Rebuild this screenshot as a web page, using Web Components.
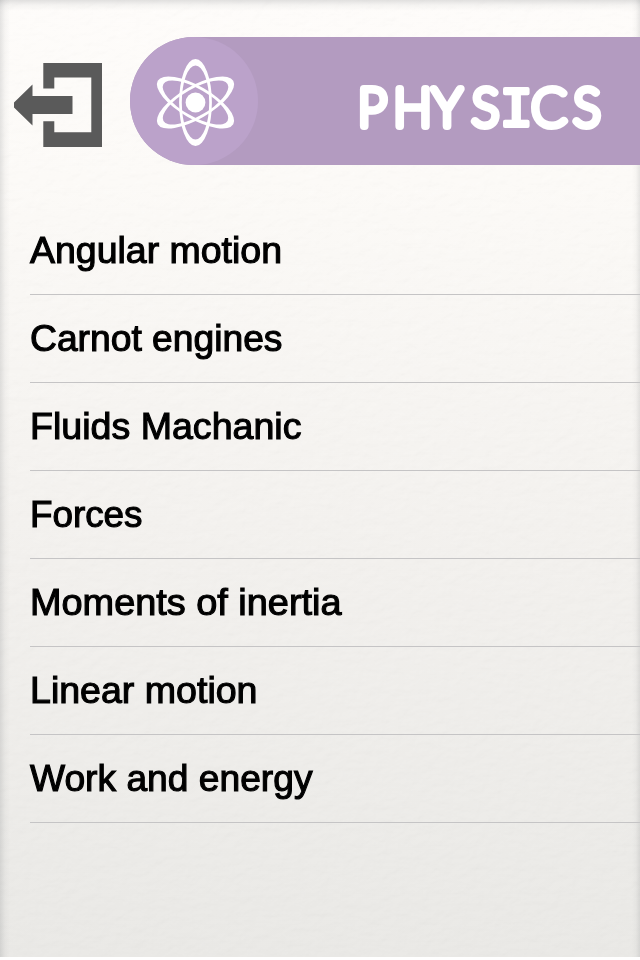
<!DOCTYPE html>
<html lang="en">
<head>
<meta charset="utf-8">
<title>Physics</title>
<style>
    html, body {
        margin: 0;
        background: #fff;
    }
</style>
</head>
<body>
<paper-screen>
    <subject-header slot="header" name="PHYSICS"></subject-header>
    <topic-list>
        <topic-item text-width="252">Angular motion</topic-item>
        <topic-item text-width="252.5">Carnot engines</topic-item>
        <topic-item text-width="271.5">Fluids Machanic</topic-item>
        <topic-item text-width="112.5">Forces</topic-item>
        <topic-item text-width="311.5">Moments of inertia</topic-item>
        <topic-item text-width="227.5">Linear motion</topic-item>
        <topic-item text-width="282.5">Work and energy</topic-item>
    </topic-list>
</paper-screen>

<script>
/**
 * Full screen paper background with shaded edges
 */
class PaperScreen extends HTMLElement {
    constructor() {
        super();
        this.attachShadow({ mode: 'open' });
        this.shadowRoot.innerHTML = `
            <style>
                :host {
                    display: block;
                    position: relative;
                    box-sizing: border-box;
                    width: 640px;
                    height: 957px;
                    overflow: hidden;
                    background: linear-gradient(#fffdfb 0, #fdfbf8 180px, #f3f1ee 560px, #ecebe8 860px, #eae9e6 100%);
                }
                .grain, .edges {
                    position: absolute;
                    inset: 0;
                    width: 100%;
                    height: 100%;
                }
                .grain {
                    opacity: 0.018;
                }
                .edges {
                    background:
                        linear-gradient(90deg, rgba(70, 75, 80, 0.14), rgba(70, 75, 80, 0.04) 5px, transparent 10px),
                        linear-gradient(270deg, rgba(70, 75, 80, 0.12), rgba(70, 75, 80, 0.03) 4px, transparent 8px),
                        linear-gradient(rgba(70, 75, 80, 0.16), rgba(70, 75, 80, 0.05) 5px, transparent 11px);
                }
                .content {
                    position: relative;
                    display: flex;
                    flex-direction: column;
                    padding-top: 37px;
                    gap: 42px;
                }
            </style>
            <svg class="grain" aria-hidden="true">
                <filter id="paper" x="0" y="0" width="100%" height="100%">
                    <feTurbulence type="fractalNoise" baseFrequency="0.08 0.13" numOctaves="3" seed="4" result="n"/>
                    <feDiffuseLighting in="n" surfaceScale="3" lighting-color="#fff">
                        <feDistantLight azimuth="60" elevation="50"/>
                    </feDiffuseLighting>
                </filter>
                <rect width="100%" height="100%" filter="url(#paper)"/>
            </svg>
            <div class="edges"></div>
            <div class="content">
                <slot name="header"></slot>
                <slot></slot>
            </div>
        `;
    }
}

/**
 * Exit button
 */
class ExitButton extends HTMLElement {
    constructor() {
        super();
        this.attachShadow({ mode: 'open' });
        this.shadowRoot.innerHTML = `
            <style>
                :host { display: block; width: 88px; height: 84px; }
                svg { display: block; fill: #5a5a5a; }
            </style>
            <svg width="88" height="84" viewBox="0 0 88 84">
                <path d="M29.3 0H88V84H29.3V58.3H40.3V69.3H77.3V14.6H40.3V25.5H29.3Z"/>
                <path d="M0 39.5L18.5 21.5V33H58.5V51H18.5V62.5L0 44.5Z"/>
            </svg>
        `;
    }
}

/**
 * Atom logo, each orbit is the gap between two ellipses
 */
class AtomIcon extends HTMLElement {
    constructor() {
        super();
        this.attachShadow({ mode: 'open' });
        const orbit = 'M-16.4 0A16.4 43.6 0 0 1 16.4 0A16.4 43.6 0 0 1 -16.4 0Z'
            + 'M-13.7 0A13.7 37 0 0 1 13.7 0A13.7 37 0 0 1 -13.7 0Z';
        const orbits = [0, 60, 120].map(angle => `
            <path fill-rule="evenodd" transform="rotate(${angle})" d="${orbit}"/>
        `).join('');
        this.shadowRoot.innerHTML = `
            <style>
                :host { display: block; width: 128px; height: 128px; border-radius: 50%; background: #bba2ca; }
                svg { display: block; fill: #fff; }
            </style>
            <svg width="128" height="128" viewBox="-65.5 -65.5 128 128">
                ${orbits}
                <circle r="9.9"/>
            </svg>
        `;
    }
}

/**
 * Header row: exit button and the coloured subject banner
 */
class SubjectHeader extends HTMLElement {
    constructor() {
        super();
        this.attachShadow({ mode: 'open' });
    }

    connectedCallback() {
        const name = this.getAttribute('name');
        this.shadowRoot.innerHTML = `
            <style>
                :host {
                    display: flex;
                    align-items: center;
                    height: 128px;
                    padding-left: 14px;
                    gap: 28px;
                }
                exit-button { margin-top: 8px; }
                .banner {
                    flex: 1;
                    display: flex;
                    justify-content: space-between;
                    height: 128px;
                    background: #b39bc0;
                    border-radius: 64px 0 0 64px;
                }
                text {
                    font: 100 51px Lato, sans-serif;
                    fill: #fff;
                    stroke: #fff;
                    stroke-width: 8px;
                    stroke-linejoin: round;
                }
                /* the I keeps its bars */
                .barred { font: 400 56px "Liberation Mono", monospace; stroke-width: 4px; }
            </style>
            <exit-button></exit-button>
            <div class="banner">
                <atom-icon></atom-icon>
                <svg width="290" height="128" viewBox="350 37 290 128">
                    <text y="126" x="358 393.5 432.5 472 499.5 531.5 573.5">${name.replace('I', '<tspan class="barred">I</tspan>')}</text>
                </svg>
            </div>
        `;
    }
}

class TopicList extends HTMLElement {
    constructor() {
        super();
        this.attachShadow({ mode: 'open' });
        this.shadowRoot.innerHTML = `
            <style>
                :host { display: flex; flex-direction: column; padding-left: 30px; }
            </style>
            <slot></slot>
        `;
    }
}

/**
 * One topic row, text-width sets the width its label is stretched to
 */
class TopicItem extends HTMLElement {
    constructor() {
        super();
        this.attachShadow({ mode: 'open' });
        this.shadowRoot.innerHTML = `
            <style>
                :host {
                    display: flex;
                    align-items: center;
                    box-sizing: border-box;
                    height: 88px;
                    padding-top: 1px;
                    border-bottom: 1px solid #c5c4c5;
                    font: 36px/42px "Liberation Sans", Arial, sans-serif;
                    color: #000;
                    -webkit-text-stroke: 1.1px #000;
                    white-space: nowrap;
                }
                span { transform-origin: 0 50%; }
            </style>
            <span><slot></slot></span>
        `;
    }

    connectedCallback() {
        const label = this.shadowRoot.querySelector('span');
        const target = Number(this.getAttribute('text-width'));
        if (!target) return;
        label.style.transform = `scaleX(${target / label.getBoundingClientRect().width})`;
    }
}

customElements.define('paper-screen', PaperScreen);
customElements.define('exit-button', ExitButton);
customElements.define('atom-icon', AtomIcon);
customElements.define('subject-header', SubjectHeader);
customElements.define('topic-list', TopicList);
customElements.define('topic-item', TopicItem);
</script>
</body>
</html>
